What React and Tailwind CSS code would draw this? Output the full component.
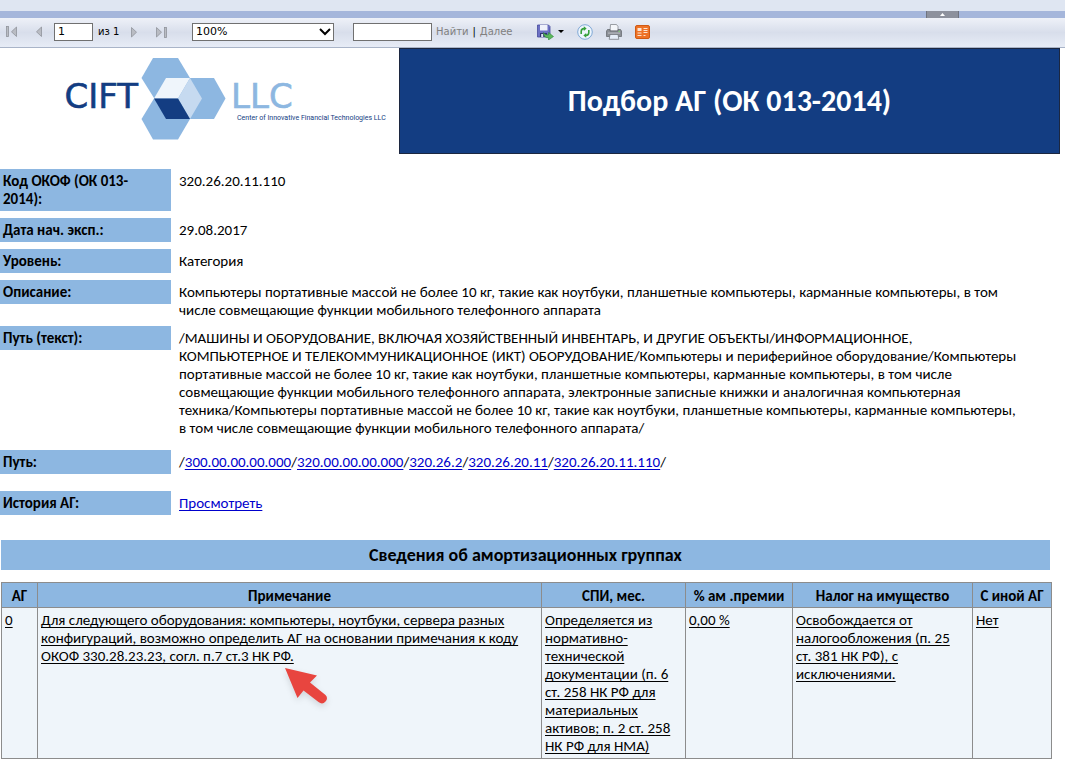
import React, { useState } from "react";

const details = [
  { label: "Код ОКОФ (ОК 013-2014):", value: "320.26.20.11.110", gap: "" },
  { label: "Дата нач. эксп.:", value: "29.08.2017", gap: "mt-[7px]" },
  { label: "Уровень:", value: "Категория", gap: "mt-[7px]" },
  {
    label: "Описание:",
    value:
      "Компьютеры портативные массой не более 10 кг, такие как ноутбуки, планшетные компьютеры, карманные компьютеры, в том\nчисле совмещающие функции мобильного телефонного аппарата",
    gap: "mt-[7px]",
  },
  {
    label: "Путь (текст):",
    value:
      "/МАШИНЫ И ОБОРУДОВАНИЕ, ВКЛЮЧАЯ ХОЗЯЙСТВЕННЫЙ ИНВЕНТАРЬ, И ДРУГИЕ ОБЪЕКТЫ/ИНФОРМАЦИОННОЕ,\nКОМПЬЮТЕРНОЕ И ТЕЛЕКОММУНИКАЦИОННОЕ (ИКТ) ОБОРУДОВАНИЕ/Компьютеры и периферийное оборудование/Компьютеры\nпортативные массой не более 10 кг, такие как ноутбуки, планшетные компьютеры, карманные компьютеры, в том числе\nсовмещающие функции мобильного телефонного аппарата, электронные записные книжки и аналогичная компьютерная\nтехника/Компьютеры портативные массой не более 10 кг, такие как ноутбуки, планшетные компьютеры, карманные компьютеры,\nв том числе совмещающие функции мобильного телефонного аппарата/",
    gap: "mt-[7px]",
  },
];

const pathCodes = ["300.00.00.00.000", "320.00.00.00.000", "320.26.2", "320.26.20.11", "320.26.20.11.110"];

const columns = [
  { title: "АГ", width: "w-[36px]" },
  { title: "Примечание", width: "" },
  { title: "СПИ, мес.", width: "w-[144px]" },
  { title: "% ам .премии", width: "w-[107px]" },
  { title: "Налог на имущество", width: "w-[180px]" },
  { title: "С иной АГ", width: "w-[79px]" },
];

const groups = [
  [
    "0",
    "Для следующего оборудования: компьютеры, ноутбуки, сервера разных\nконфигураций, возможно определить АГ на основании примечания к коду\nОКОФ 330.28.23.23, согл. п.7 ст.3 НК РФ.",
    "Определяется из нормативно-технической документации (п. 6 ст. 258 НК РФ для материальных активов; п. 2 ст. 258 НК РФ для НМА)",
    "0,00 %",
    "Освобождается от налогообложения (п. 25\nст. 381 НК РФ), с исключениями.",
    "Нет",
  ],
];

const NavIcon = ({ bar, flip }) => (
  <svg width="12" height="12" viewBox="0 0 12 12" className={flip ? "rotate-180" : ""}>
    {bar && <rect x="0.5" y="0.5" width="2" height="10" fill="#b9bcc3" stroke="#8f939b" strokeWidth="0.8" />}
    <path d="M10.5 1v9.5L5.5 5.8z" fill="#b9bcc3" stroke="#8f939b" strokeWidth="0.8" />
  </svg>
);

const SaveIcon = () => (
  <svg width="17" height="16" viewBox="0 0 17 16">
    <path d="M.5 1h11l1.5 1.5V13H.5z" fill="#6c70c4" stroke="#454a9c" strokeWidth="0.8" />
    <rect x="3" y="1" width="7.5" height="5.5" fill="#eef1fb" />
    <rect x="3" y="9" width="7" height="4" fill="#2f3470" />
    <rect x="4.2" y="10" width="2" height="3" fill="#dfe3f5" />
    <path d="M6.5 8.5c1 2 2.500 2.500 5 2.300V8.500l5 4-5 3.500v-2.200c-3.500 0-5-2-5-5.300z" fill="#5cb85c" stroke="#2f8a3a" strokeWidth="0.6" />
  </svg>
);

const RefreshIcon = () => (
  <svg width="16" height="16" viewBox="0 0 16 16">
    <circle cx="8" cy="8" r="7.300" fill="#edf5fd" stroke="#7fa8d6" strokeWidth="1" />
    <path d="M4.200 10V7.500C4.200 5.500 5.200 4.600 7 4.600" fill="none" stroke="#36a13c" strokeWidth="1.600" />
    <path d="M6.800 2.200 9.600 4.600 6.800 7z" fill="#36a13c" />
    <path d="M11.800 6v2.500c0 2-1 2.900-2.800 2.900" fill="none" stroke="#36a13c" strokeWidth="1.600" />
    <path d="M9.200 13.800 6.400 11.400 9.200 9z" fill="#36a13c" />
  </svg>
);

const PrintIcon = () => (
  <svg width="16" height="16" viewBox="0 0 16 16">
    <path d="M4.500.5h6l1.500 2V7h-8z" fill="#f4f6fa" stroke="#85898f" strokeWidth="0.8" />
    <path d="M1.500 5.500H4V7h8V5.500h2.500l1 1.500v5.500H.5V7z" fill="#8b8f96" stroke="#5f6369" strokeWidth="0.7" />
    <rect x="2" y="8.500" width="12" height="1.200" fill="#b5b8be" />
    <path d="M4 10.500h8l.8 4.800H3.200z" fill="#e6eef8" stroke="#6c7076" strokeWidth="0.7" />
    <rect x="12.500" y="6.800" width="1.500" height="1" fill="#7ddc6a" />
  </svg>
);

const FeedIcon = () => (
  <svg width="15" height="14" viewBox="0 0 15 14">
    <rect x="0.500" y="0.500" width="14" height="13" rx="1.500" fill="#ee7226" stroke="#cf5a14" />
    <rect x="2.500" y="3" width="4" height="3" fill="#fde4d0" />
    <path d="M2.500 8h4M2.500 10.500h4" stroke="#fde4d0" strokeWidth="1.200" />
    <path d="M8.500 3.500h4M8.500 5.500h4M8.500 7.500h4" stroke="#fde4d0" strokeWidth="1" />
    <path d="M8.500 10.500h2" stroke="#fde4d0" strokeWidth="1" />
  </svg>
);

const Toolbar = () => {
  const [page, setPage] = useState("1");
  const [search, setSearch] = useState("");

  return (
    <div className="flex h-[30px] items-center border-b border-[#a9b4c8] bg-linear-to-b from-[#eef1f8] via-[#d8deeb] to-[#e7ecf6] pb-[2px] pl-[6px] font-['DejaVu_Sans',sans-serif] text-[11px] text-black">
      <button aria-label="Первая страница"><NavIcon bar /></button>
      <button aria-label="Предыдущая страница" className="ml-[13px]"><NavIcon /></button>
      <input
        aria-label="Страница"
        value={page}
        onChange={(e) => setPage(e.target.value)}
        className="ml-[11px] h-[18px] w-[39px] border border-[#707070] bg-white px-[3px]"
      />
      <span className="ml-[5px] w-[24px] whitespace-nowrap text-[10px]">из 1</span>
      <button aria-label="Следующая страница" className="ml-[8px]"><NavIcon flip /></button>
      <button aria-label="Последняя страница" className="ml-[13px]"><NavIcon bar flip /></button>
      <div className="relative ml-[25px]">
        <select
          aria-label="Масштаб"
          defaultValue="100%"
          className="block h-[18px] w-[142px] appearance-none border border-[#707070] bg-white px-[3px] leading-4"
        >
          <option>50%</option>
          <option>100%</option>
          <option>200%</option>
        </select>
        <svg width="12" height="8" viewBox="0 0 12 8" className="pointer-events-none absolute top-[5px] right-[3px]">
          <path d="M1 1l5 5 5-5" fill="none" stroke="#000" strokeWidth="2" />
        </svg>
      </div>
      <input
        aria-label="Текст для поиска"
        value={search}
        onChange={(e) => setSearch(e.target.value)}
        className="ml-[19px] h-[18px] w-[79px] border border-[#707070] bg-white px-[3px]"
      />
      <a href="#find" className="ml-1 text-[10px] text-[#808080]">Найти</a>
      <span className="mx-1 text-[10px]">|</span>
      <a href="#next" className="text-[10px] text-[#808080]">Далее</a>
      <button aria-label="Экспорт" className="ml-[24px] flex items-center gap-1">
        <SaveIcon />
        <svg width="6" height="3" viewBox="0 0 6 3"><path d="M0 0h6L3 3z" /></svg>
      </button>
      <button aria-label="Обновить" className="ml-[13px]"><RefreshIcon /></button>
      <button aria-label="Печать" className="ml-[13px]"><PrintIcon /></button>
      <button aria-label="Канал данных" className="ml-[13px]"><FeedIcon /></button>
    </div>
  );
};

const Logo = () => (
  <svg width="399" height="106" viewBox="0 48 399 106" className="shrink-0">
    <path d="M141.500 78 153 58h25l12 20-12 20h-24z" fill="#8db7e1" />
    <path d="M154 98.500 166 78h48l11.500 20.500L214 119h-48z" fill="#8db7e1" />
    <path d="M154 98.500h24l12 20.500-12 20.500h-25L141.500 119z" fill="#8db7e1" />
    <path d="M154 98.500 166 78h24l-12 20.500z" fill="#eff5fb" />
    <path d="M190 78l12 20.500-12 20.500-12-20.500z" fill="#c6daf0" />
    <path d="M154 98.500h24l12 20.500h-24z" fill="#133d82" />
    <g className="font-['DejaVu_Sans',sans-serif]" fontSize="34">
      <text x="138" y="108" textAnchor="end" fill="#133d82" stroke="#133d82" strokeWidth="0.6">CIFT</text>
      <text x="231" y="108" fill="#8db7e1" stroke="#8db7e1" strokeWidth="0.6">LLC</text>
    </g>
    <text x="237" y="120" fontSize="7" fill="#133d82" className="font-[Roboto,sans-serif]">
      Center of Innovative Financial Technologies LLC
    </text>
  </svg>
);

const DetailRow = ({ label, gap, children }) => (
  <div className={`flex items-start gap-2 ${gap}`}>
    <dt className="w-[171px] shrink-0 bg-[#8db7e1] px-[3px] py-[3px] pr-[20px] font-bold">{label}</dt>
    <dd className="min-w-0 flex-1 pt-[3px] whitespace-pre-line">{children}</dd>
  </div>
);

const App = () => {
  return (
    <div className="bg-white font-[Calibri,Carlito,Lato,sans-serif] text-[15px] leading-[18px] text-black">
      <div className="h-[11px] bg-[#dfe6f2]" />
      <div className="flex h-[7px] justify-end bg-[#a5b6db] pr-[106px]">
        <button aria-label="Свернуть" className="flex w-[33px] items-center justify-center border-x border-[#70747f] bg-[#8d919d]">
          <svg width="5" height="3" viewBox="0 0 5 3"><path d="M0 3h5L2.500 0z" fill="#fff" /></svg>
        </button>
      </div>
      <Toolbar />

      <header className="flex pr-[5px]">
        <Logo />
        <h1 className="flex flex-1 items-center justify-center border border-[#1c2740] bg-[#133d82] text-[30px] font-bold text-white">
          Подбор АГ (ОК 013-2014)
        </h1>
      </header>

      <dl className="mt-[15px] pr-[16px]">
        {details.map((row) => (
          <DetailRow key={row.label} label={row.label} gap={row.gap}>
            {row.value}
          </DetailRow>
        ))}
        <DetailRow label="Путь:" gap="mt-[13px]">
          /
          {pathCodes.map((code) => (
            <React.Fragment key={code}>
              <a href={`#${code}`} className="text-[#0000cc] underline underline-offset-2">{code}</a>/
            </React.Fragment>
          ))}
        </DetailRow>
        <DetailRow label="История АГ:" gap="mt-[17px]">
          <a href="#history" className="text-[#0000cc] underline underline-offset-2">Просмотреть</a>
        </DetailRow>
      </dl>

      <h2 className="mt-[25px] mr-[15px] ml-px bg-[#8db7e1] py-[6px] text-center text-[18px] font-bold">
        Сведения об амортизационных группах
      </h2>

      <div className="relative mt-3 mr-[13px] ml-px">
        <table className="w-full table-fixed border-collapse border border-[#8c8c8c]">
          <thead>
            <tr className="bg-[#8db7e1]">
              {columns.map((col) => (
                <th key={col.title} className={`border border-[#8c8c8c] pt-[4px] pb-[2px] whitespace-nowrap ${col.width}`}>
                  {col.title}
                </th>
              ))}
            </tr>
          </thead>
          <tbody>
            {groups.map((cells) => (
              <tr key={cells[0]} className="bg-[#eff5fa]">
                {cells.map((cell, i) => (
                  <td key={i} className="border border-[#8c8c8c] px-[3px] pt-[3px] pb-[3px] align-top whitespace-pre-line">
                    <a href="#group" className="underline underline-offset-2">{cell}</a>
                  </td>
                ))}
              </tr>
            ))}
          </tbody>
        </table>
        <svg width="48" height="42" viewBox="0 0 48 42" className="absolute top-[85px] left-[282px] drop-shadow-md">
          <path d="M2 1 34 8.500 27 15.500 42.500 28Q45.500 31 42.500 34.500T35.500 35L20.500 23.500 14.500 31z" fill="#e8453f" />
        </svg>
      </div>
    </div>
  );
};

export default App;
